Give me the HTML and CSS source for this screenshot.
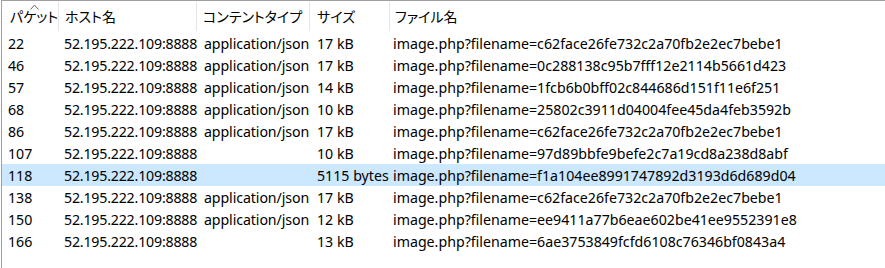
FILE: index.html
```html
<!DOCTYPE html>
<html lang="ja">
<head>
    <meta charset="UTF-8">
    <title>パケット一覧</title>
    <link rel="stylesheet" href="styles.css">
</head>
<body>
    <div class="list">
        <!-- header -->
        <div class="row head">
            <div class="cell c1">
                <svg class="sort" width="9" height="6" viewBox="0 0 9 6"><polyline points="0.5,5.5 4.5,1 8.5,5.5" fill="none" stroke="#666" stroke-width="1"/></svg>
                パケット
            </div>
            <div class="cell c2">ホスト名</div>
            <div class="cell c3">コンテントタイプ</div>
            <div class="cell c4">サイズ</div>
            <div class="cell c5">ファイル名</div>
        </div>
        <div id="rows"></div>
    </div>

    <script>
        const packets = [
            { id: 22, type: 'application/json', size: '17 kB', file: 'c62face26fe732c2a70fb2e2ec7bebe1' },
            { id: 46, type: 'application/json', size: '17 kB', file: '0c288138c95b7fff12e2114b5661d423' },
            { id: 57, type: 'application/json', size: '14 kB', file: '1fcb6b0bff02c844686d151f11e6f251' },
            { id: 68, type: 'application/json', size: '10 kB', file: '25802c3911d04004fee45da4feb3592b' },
            { id: 86, type: 'application/json', size: '17 kB', file: 'c62face26fe732c2a70fb2e2ec7bebe1' },
            { id: 107, type: '', size: '10 kB', file: '97d89bbfe9befe2c7a19cd8a238d8abf' },
            { id: 118, type: '', size: '5115 bytes', file: 'f1a104ee8991747892d3193d6d689d04', selected: true },
            { id: 138, type: 'application/json', size: '17 kB', file: 'c62face26fe732c2a70fb2e2ec7bebe1' },
            { id: 150, type: 'application/json', size: '12 kB', file: 'ee9411a77b6eae602be41ee9552391e8' },
            { id: 166, type: '', size: '13 kB', file: '6ae3753849fcfd6108c76346bf0843a4' }
        ];

        const rowsDiv = document.getElementById('rows');
        packets.forEach(p => {
            const row = document.createElement('div');
            row.className = p.selected ? 'row selected' : 'row';
            const values = [p.id, '52.195.222.109:8888', p.type, p.size, 'image.php?filename=' + p.file];
            values.forEach((v, i) => {
                const cell = document.createElement('div');
                cell.className = 'cell c' + (i + 1);
                cell.textContent = v;
                row.appendChild(cell);
            });
            rowsDiv.appendChild(row);
        });
    </script>
</body>
</html>
```

FILE: styles.css
```css
body {
    margin: 0;
    background-color: #fff;
    font-family: "Noto Sans", "Noto Sans CJK JP", sans-serif;
    font-size: 14.2px;
    color: #000;
}

.list {
    border-top: 1px solid #a0a0a0;
    border-left: 1px solid #a0a0a0;
    margin-left: 1px;
    height: 267px;
}

.row {
    display: flex;
    height: 22px;
    align-items: center;
    white-space: nowrap;
}

.row.selected {
    background-color: #cce8ff;
}

.cell {
    flex: none;
}

.c1 { width: 50px; padding-left: 6px; }
.c2 { width: 133px; padding-left: 6px; letter-spacing: -0.2px; }
.c3 { width: 106px; padding-left: 7px; letter-spacing: -0.1px; }
.c4 { width: 73px; padding-left: 7px; }
.c5 { padding-left: 3px; }

.head {
    height: 31px;
    font-family: "Noto Sans CJK JP", sans-serif;
    font-feature-settings: "palt";
    font-size: 14px;
}

.head .cell {
    height: 29px;
    line-height: 29px;
    border-right: 1px solid #e5e5e5;
    position: relative;
    letter-spacing: 0;
}

.head .c1 { width: 48px; padding-left: 8px; }
.head .c2 { width: 131px; padding-left: 6px; }
.head .c3 { width: 106px; padding-left: 6px; }
.head .c4 { width: 72px; padding-left: 7px; }
.head .c5 { border-right: none; padding-left: 5px; }

.sort {
    position: absolute;
    left: 28px;
    top: 2px;
}
```
